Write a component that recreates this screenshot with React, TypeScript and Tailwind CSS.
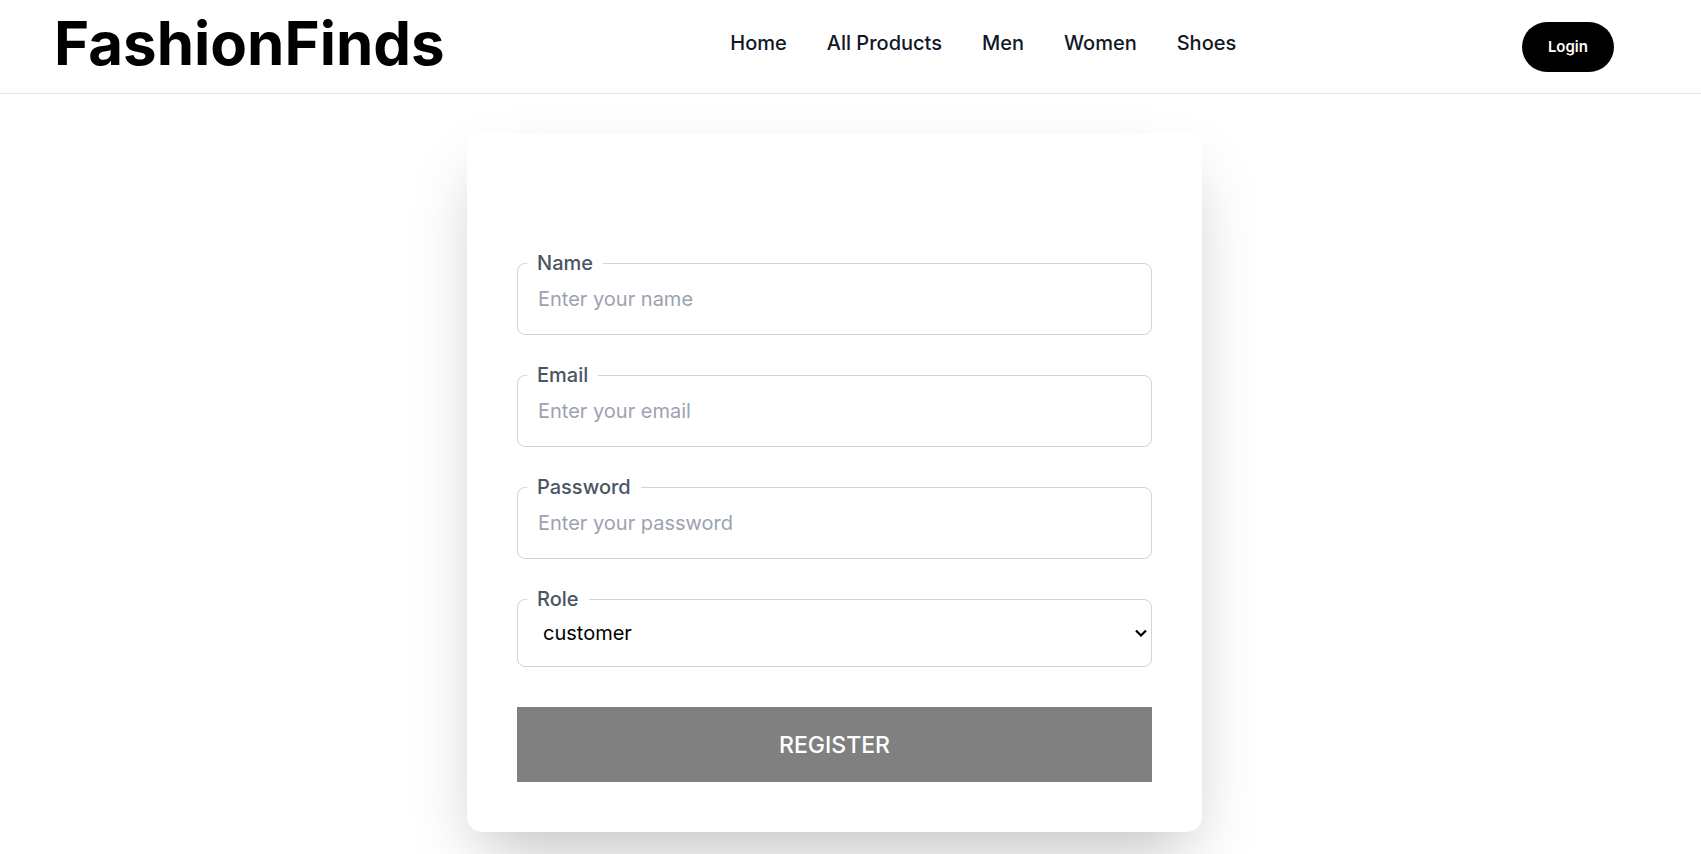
import { useState } from "react";

const links = ["Home", "All Products", "Men", "Women", "Shoes"];

const fields = [
  { id: "name", label: "Name", type: "text", placeholder: "Enter your name" },
  { id: "email", label: "Email", type: "email", placeholder: "Enter your email" },
  { id: "password", label: "Password", type: "password", placeholder: "Enter your password" },
];

const labelClass =
  "absolute -top-[15px] left-[10px] bg-white px-[10px] text-[20px] leading-[30px] font-medium text-[#4b5563]";

export default function App() {
  const [role, setRole] = useState("customer");

  return (
    <div className="min-h-screen overflow-hidden bg-white font-['Inter',sans-serif] text-black">
      <header className="flex h-[94px] items-start justify-between border-b border-[#e5e7eb] pr-[87px] pl-[54px]">
        <a href="#" className="pt-[13px] text-[60px] leading-[60px] font-bold">
          FashionFinds
        </a>
        <nav className="flex gap-[40px] pt-[28px] text-[20px] leading-[30px] font-medium text-[#111827]">
          {links.map((link) => (
            <a key={link} href="#">
              {link}
            </a>
          ))}
        </nav>
        <div className="flex pt-[22px]">
          <button className="h-[50px] rounded-full bg-black px-[26px] text-[15px] leading-[20px] font-semibold text-white">
            Login
          </button>
        </div>
      </header>

      <main className="flex justify-center pt-[39px] pr-8 pb-16">
        <form
          className="flex w-full max-w-[735px] flex-col gap-[40px] rounded-[15px] bg-white px-[50px] pt-[130px] pb-[50px] shadow-[0_31px_63px_-15px_rgba(0,0,0,0.25)]"
          onSubmit={(e) => e.preventDefault()}
        >
          {fields.map((field) => (
            <div key={field.id} className="relative">
              <input
                id={field.id}
                type={field.type}
                placeholder={field.placeholder}
                className="block h-[72px] w-full rounded-[8px] border border-[#d1d5db] px-[20px] text-[20px] leading-[30px] placeholder:text-[#9ca3af]"
              />
              <label htmlFor={field.id} className={labelClass}>
                {field.label}
              </label>
            </div>
          ))}
          <div className="relative">
            <select
              id="role"
              value={role}
              onChange={(e) => setRole(e.target.value)}
              className="block h-[68px] w-full appearance-none rounded-[8px] border border-[#d1d5db] bg-white px-[25px] text-[20px] leading-[30px]"
            >
              <option value="customer">customer</option>
              <option value="seller">seller</option>
            </select>
            <svg
              className="pointer-events-none absolute inset-y-0 right-[5px] my-auto h-[8px] w-[12px]"
              viewBox="0 0 12 8"
              fill="none"
              stroke="black"
              strokeWidth="2.2"
              aria-hidden="true"
            >
              <path d="M1 1.5 6 6.5 11 1.5" />
            </svg>
            <label htmlFor="role" className={labelClass}>
              Role
            </label>
          </div>
          <button
            type="submit"
            className="h-[75px] w-full bg-[#808080] text-[23px] leading-[30px] font-medium text-white uppercase"
          >
            Register
          </button>
        </form>
      </main>
    </div>
  );
}
